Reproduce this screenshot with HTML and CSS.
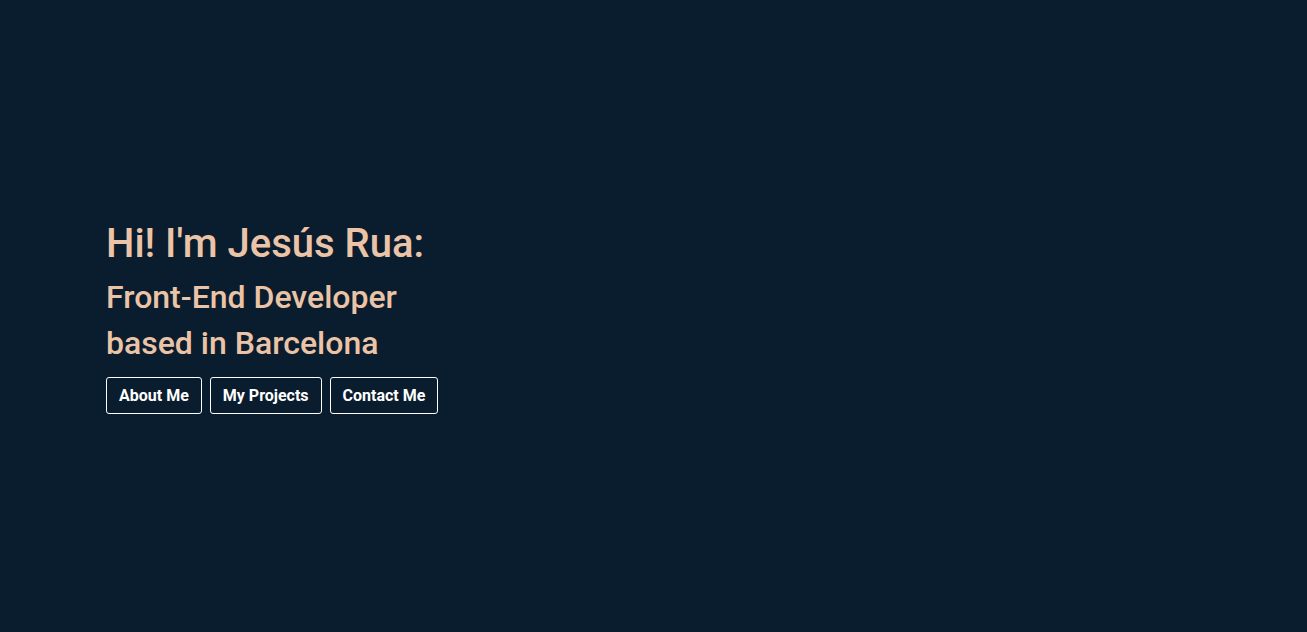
FILE: index.html
```html
<!DOCTYPE html>
<html lang="en">
<head>
<meta charset="utf-8">
<title>Jesús Rua</title>
<link rel="stylesheet" href="styles.css">
</head>
<body>
<main class="hero">
  <div class="intro">
    <h1 class="title">Hi! I'm Jesús Rua:</h1>
    <h2 class="subtitle">Front-End Developer<br>based in Barcelona</h2>
    <nav class="actions">
      <a class="btn" href="#about">About Me</a>
      <a class="btn" href="#projects">My Projects</a>
      <a class="btn" href="#contact">Contact Me</a>
    </nav>
  </div>
</main>
</body>
</html>
```
FILE: styles.css
```css
html, body {
  margin: 0;
  padding: 0;
  height: 100%;
}
body {
  background: #0a1d2e;
  font-family: Roboto, "Noto Sans", sans-serif;
}
.hero {
  min-height: 100vh;
  display: flex;
  align-items: center;
  padding: 2px 0 0 106px;
  box-sizing: border-box;
}
.intro {
  display: flex;
  flex-direction: column;
}
.title {
  margin: 0;
  font-size: 40px;
  font-weight: 500;
  line-height: 48px;
  color: #ebc4a8;
}
.subtitle {
  margin: 5.5px 0 0;
  font-size: 32px;
  font-weight: 500;
  line-height: 46px;
  color: #ebc4a8;
}
.actions {
  display: flex;
  gap: 8px;
  margin-top: 11px;
}
.btn {
  display: inline-block;
  padding: 0 12px;
  height: 37px;
  line-height: 35px;
  box-sizing: border-box;
  border: 1px solid #ffffff;
  border-radius: 3px;
  color: #ffffff;
  font-size: 16px;
  font-weight: 700;
  text-decoration: none;
}
```
